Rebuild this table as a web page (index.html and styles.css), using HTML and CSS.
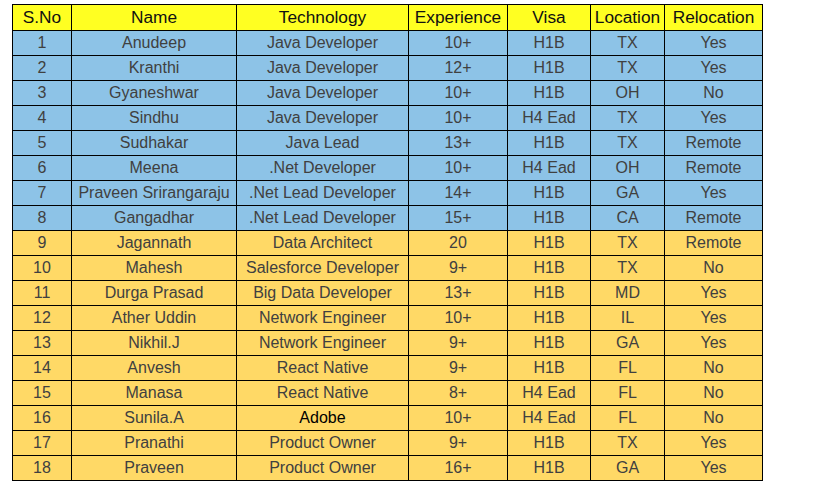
FILE: index.html
```html
<!DOCTYPE html>
<html>
<head>
<meta charset="utf-8">
<link rel="stylesheet" href="styles.css">
</head>
<body>
<div class="wrap">
<table class="grid">
<colgroup>
<col class="c1"><col class="c2"><col class="c3"><col class="c4"><col class="c5"><col class="c6"><col class="c7">
</colgroup>
<thead>
<tr class="head"><th>S.No</th><th>Name</th><th>Technology</th><th>Experience</th><th>Visa</th><th>Location</th><th>Relocation</th></tr>
</thead>
<tbody>
<tr class="blue"><td>1</td><td>Anudeep</td><td>Java Developer</td><td>10+</td><td>H1B</td><td>TX</td><td>Yes</td></tr>
<tr class="blue"><td>2</td><td>Kranthi</td><td>Java Developer</td><td>12+</td><td>H1B</td><td>TX</td><td>Yes</td></tr>
<tr class="blue"><td>3</td><td>Gyaneshwar</td><td>Java Developer</td><td>10+</td><td>H1B</td><td>OH</td><td>No</td></tr>
<tr class="blue"><td>4</td><td>Sindhu</td><td>Java Developer</td><td>10+</td><td>H4 Ead</td><td>TX</td><td>Yes</td></tr>
<tr class="blue"><td>5</td><td>Sudhakar</td><td>Java Lead</td><td>13+</td><td>H1B</td><td>TX</td><td>Remote</td></tr>
<tr class="blue"><td>6</td><td>Meena</td><td>.Net Developer</td><td>10+</td><td>H4 Ead</td><td>OH</td><td>Remote</td></tr>
<tr class="blue"><td>7</td><td>Praveen Srirangaraju</td><td>.Net Lead Developer</td><td>14+</td><td>H1B</td><td>GA</td><td>Yes</td></tr>
<tr class="blue"><td>8</td><td>Gangadhar</td><td>.Net Lead Developer</td><td>15+</td><td>H1B</td><td>CA</td><td>Remote</td></tr>
<tr class="gold"><td>9</td><td>Jagannath</td><td>Data Architect</td><td>20</td><td>H1B</td><td>TX</td><td>Remote</td></tr>
<tr class="gold"><td>10</td><td>Mahesh</td><td>Salesforce Developer</td><td>9+</td><td>H1B</td><td>TX</td><td>No</td></tr>
<tr class="gold"><td>11</td><td>Durga Prasad</td><td>Big Data Developer</td><td>13+</td><td>H1B</td><td>MD</td><td>Yes</td></tr>
<tr class="gold"><td>12</td><td>Ather Uddin</td><td>Network Engineer</td><td>10+</td><td>H1B</td><td>IL</td><td>Yes</td></tr>
<tr class="gold"><td>13</td><td>Nikhil.J</td><td>Network Engineer</td><td>9+</td><td>H1B</td><td>GA</td><td>Yes</td></tr>
<tr class="gold"><td>14</td><td>Anvesh</td><td>React Native</td><td>9+</td><td>H1B</td><td>FL</td><td>No</td></tr>
<tr class="gold"><td>15</td><td>Manasa</td><td>React Native</td><td>8+</td><td>H4 Ead</td><td>FL</td><td>No</td></tr>
<tr class="gold"><td>16</td><td>Sunila.A</td><td class="dark">Adobe</td><td>10+</td><td>H4 Ead</td><td>FL</td><td>No</td></tr>
<tr class="gold"><td>17</td><td>Pranathi</td><td>Product Owner</td><td>9+</td><td>H1B</td><td>TX</td><td>Yes</td></tr>
<tr class="gold"><td>18</td><td>Praveen</td><td>Product Owner</td><td>16+</td><td>H1B</td><td>GA</td><td>Yes</td></tr>
</tbody>
</table>
</div>
</body>
</html>
```
FILE: styles.css
```css
html, body {
  margin: 0;
  padding: 0;
  background: #ffffff;
}
.wrap {
  padding: 4px 0 0 12px;
}
.grid {
  border-collapse: collapse;
  table-layout: fixed;
  width: 751px;
  font-family: "Liberation Sans", Arial, sans-serif;
  font-size: 16px;
}
.c1 { width: 59px; }
.c2 { width: 165px; }
.c3 { width: 172px; }
.c4 { width: 99px; }
.c5 { width: 83px; }
.c6 { width: 74px; }
.c7 { width: 98px; }
.grid th, .grid td {
  border: 1px solid #000000;
  padding: 0;
  text-align: center;
  white-space: nowrap;
  font-weight: normal;
  line-height: 18px;
}
.grid th {
  height: 24px;
  padding-bottom: 1px;
  font-size: 17.3px;
  line-height: 20px;
  color: #111111;
  background: #ffff22;
}
.grid td {
  height: 24px;
  color: #404040;
}
.blue td { background: #8dc3e7; }
.gold td { background: #ffd966; }
.grid td.dark { color: #000000; }
```
